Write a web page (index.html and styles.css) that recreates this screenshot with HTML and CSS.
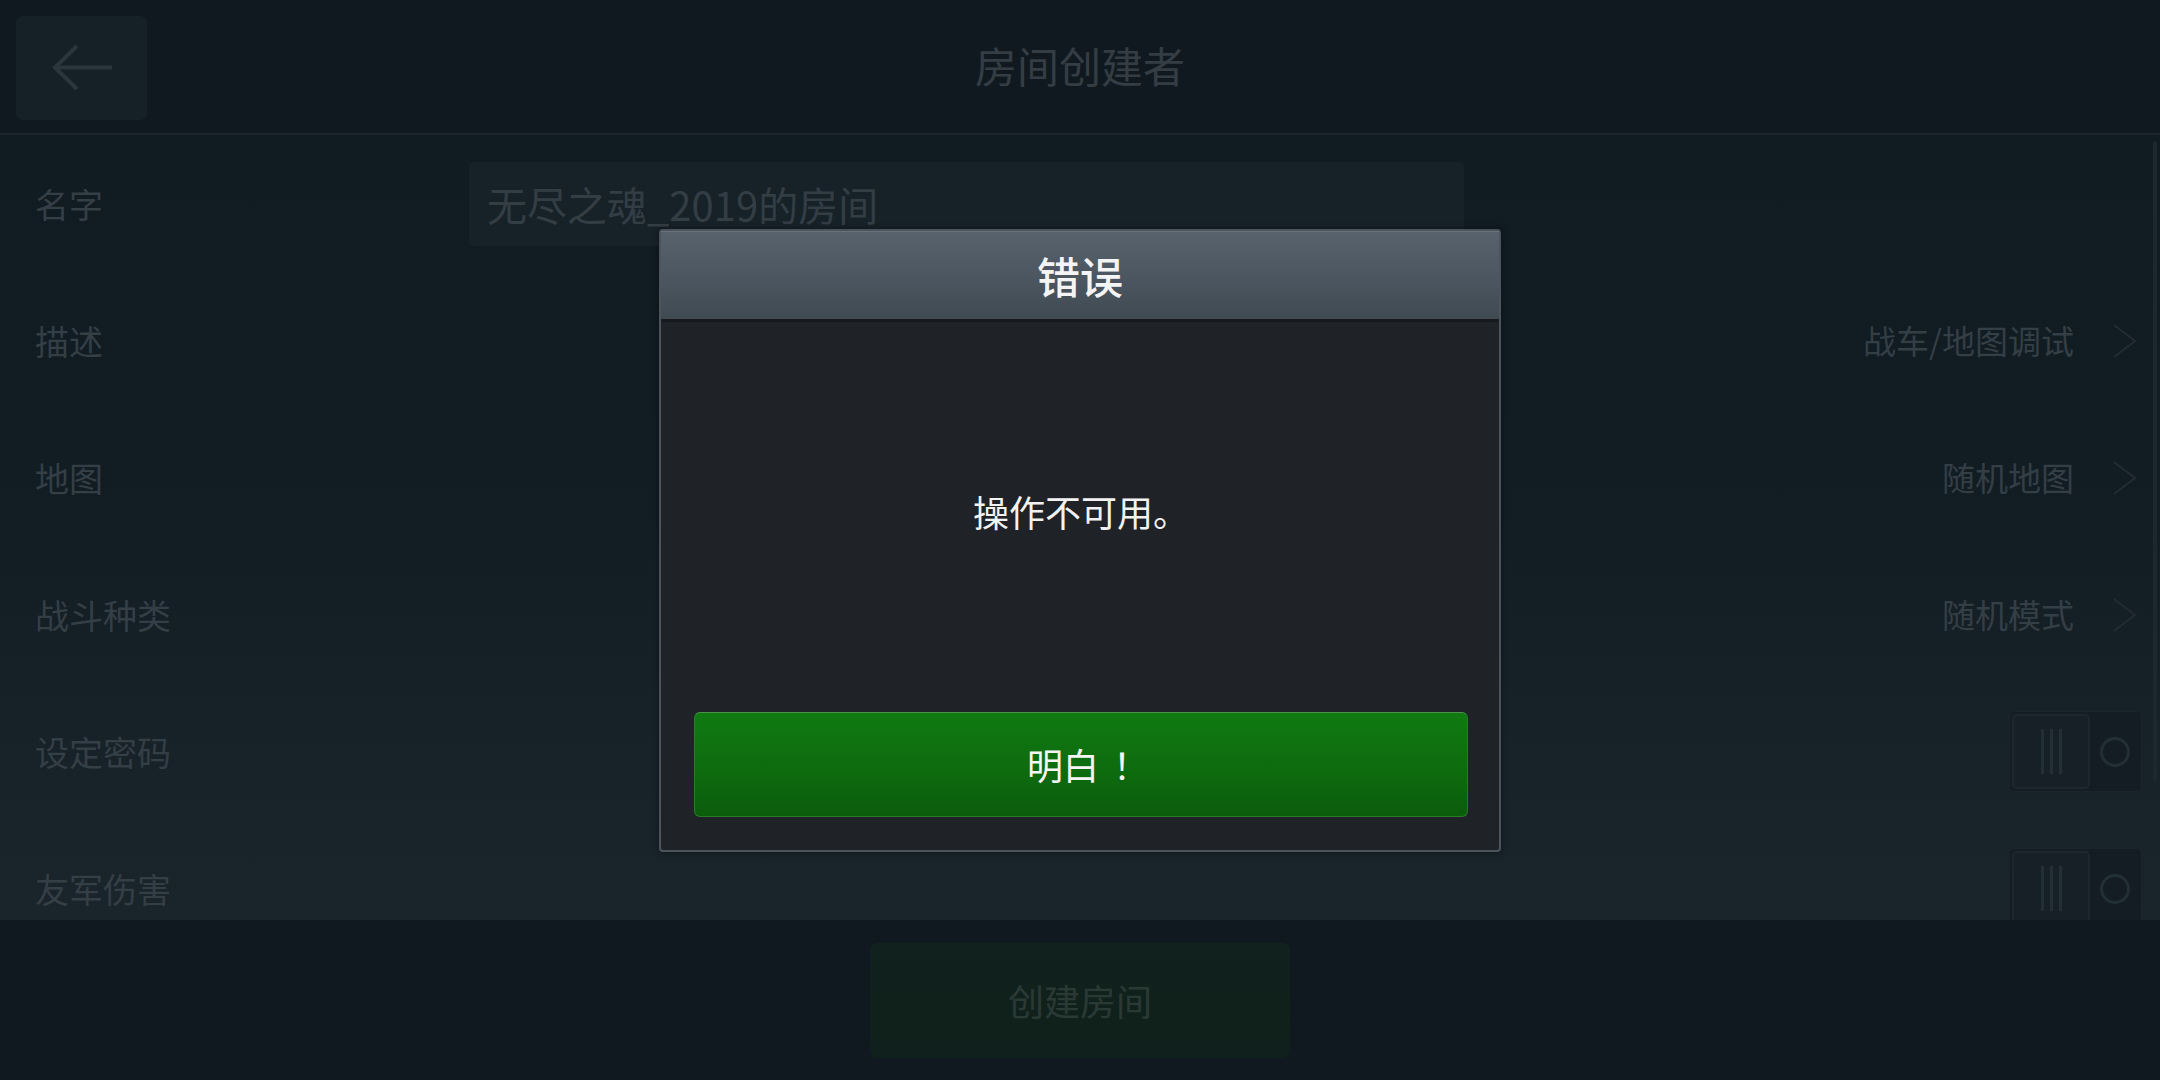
FILE: index.html
```html
<!DOCTYPE html>
<html lang="zh-CN">
<head>
<meta charset="utf-8">
<title>房间创建者</title>
<link rel="stylesheet" href="styles.css">
</head>
<body>
<div class="app">
  <header class="topbar">
    <button class="back-btn" aria-label="返回">
      <svg width="60" height="47" viewBox="0 0 60 47"><path d="M25 2 L3 23.5 L25 45 M3 23.5 H60" fill="none" stroke="#2a353c" stroke-width="4"/></svg>
    </button>
    <h1 class="title">房间创建者</h1>
    <div class="spacer"></div>
  </header>

  <main class="settings">
    <div class="row">
      <span class="label">名字</span>
      <div class="name-input">无尽之魂_2019的房间</div>
    </div>
    <div class="row">
      <span class="label">描述</span>
      <span class="value">战车/地图调试</span>
      <svg class="chev" width="26" height="36" viewBox="0 0 26 36"><path d="M2 2 L23 18 L2 34" fill="none" stroke="#222c32" stroke-width="2"/></svg>
    </div>
    <div class="row">
      <span class="label">地图</span>
      <span class="value">随机地图</span>
      <svg class="chev" width="26" height="36" viewBox="0 0 26 36"><path d="M2 2 L23 18 L2 34" fill="none" stroke="#222c32" stroke-width="2"/></svg>
    </div>
    <div class="row">
      <span class="label">战斗种类</span>
      <span class="value">随机模式</span>
      <svg class="chev" width="26" height="36" viewBox="0 0 26 36"><path d="M2 2 L23 18 L2 34" fill="none" stroke="#222c32" stroke-width="2"/></svg>
    </div>
    <div class="row">
      <span class="label">设定密码</span>
      <div class="toggle">
        <div class="knob"><i></i><i></i><i></i></div>
        <div class="off-mark"></div>
      </div>
    </div>
    <div class="row">
      <span class="label">友军伤害</span>
      <div class="toggle">
        <div class="knob"><i></i><i></i><i></i></div>
        <div class="off-mark"></div>
      </div>
    </div>
    <div class="scrollbar"></div>
  </main>

  <footer class="bottombar">
    <button class="create-btn">创建房间</button>
  </footer>

  <div class="overlay">
    <div class="dialog">
      <div class="dialog-title">错误</div>
      <div class="dialog-body">
        <div class="dialog-msg">操作不可用。</div>
        <button class="ok-btn">明白<span class="bang">！</span></button>
      </div>
    </div>
  </div>
</div>
</body>
</html>
```

FILE: styles.css
```css
* { box-sizing: border-box; }
html, body {
  margin: 0;
  padding: 0;
  width: 2160px;
  height: 1080px;
  overflow: hidden;
  background: #10191f;
  font-family: "Noto Sans CJK SC", "Noto Sans", sans-serif;
}
button {
  font-family: inherit;
  border: none;
  padding: 0;
  cursor: pointer;
}
.app {
  position: relative;
  width: 2160px;
  height: 1080px;
  display: flex;
  flex-direction: column;
}

/* header */
.topbar {
  height: 135px;
  flex: 0 0 135px;
  background: #101920;
  border-bottom: 2px solid #1b252c;
  display: grid;
  grid-template-columns: 1fr auto 1fr;
  align-items: center;
  padding: 0 16px;
}
.back-btn {
  width: 131px;
  height: 104px;
  background: #152027;
  border-radius: 7px;
  display: flex;
  align-items: center;
  justify-content: center;
  margin-top: 2px;
}
.title {
  margin: 0 0 4px;
  font-size: 42px;
  font-weight: 400;
  color: #343d43;
  line-height: 1;
}

/* settings list */
.settings {
  position: relative;
  flex: 0 0 785px;
  height: 785px;
  overflow: hidden;
  background: linear-gradient(180deg, #111b22 0%, #121c23 45%, #172128 75%, #1a242b 100%);
}
.row {
  height: 137px;
  display: flex;
  align-items: center;
  padding: 0 18px 0 35px;
}
.label {
  width: 434px;
  font-size: 34px;
  color: #343e45;
  line-height: 1;
}
.name-input {
  width: 995px;
  height: 84px;
  background: #172128;
  border-radius: 4px;
  display: flex;
  align-items: center;
  padding-left: 18px;
  font-size: 40px;
  color: #333d44;
}
.value {
  margin-left: auto;
  font-size: 33px;
  color: #343e45;
  line-height: 1;
}
.chev {
  margin-left: 38px;
  margin-right: 4px;
}
.toggle {
  margin-left: auto;
  width: 133px;
  height: 81px;
  background: #141d23;
  border: 1px solid #1a242a;
  border-radius: 5px;
  display: flex;
  align-items: center;
  padding: 2px;
}
.knob {
  width: 78px;
  height: 75px;
  background: #172027;
  border: 2px solid #1c272e;
  border-radius: 5px;
  display: flex;
  align-items: center;
  justify-content: center;
  gap: 6px;
}
.knob i {
  display: block;
  width: 3px;
  height: 45px;
  background: #232f37;
}
.off-mark {
  width: 30px;
  height: 30px;
  margin-left: 10px;
  border: 3px solid #232f37;
  border-radius: 50%;
}
.scrollbar {
  position: absolute;
  right: 3px;
  top: 6px;
  width: 4px;
  height: 640px;
  background: #1d272e;
  border-radius: 2px;
}

/* bottom bar */
.bottombar {
  flex: 1;
  background: #10191f;
  display: flex;
  align-items: center;
  justify-content: center;
}
.create-btn {
  width: 420px;
  height: 115px;
  border-radius: 8px;
  background: linear-gradient(180deg, #11221e 0%, #10211c 70%, #0f1f1b 100%);
  color: #2b3935;
  font-size: 36px;
}

/* dialog */
.overlay {
  position: absolute;
  inset: 0;
  display: flex;
  align-items: center;
  justify-content: center;
}
.dialog {
  width: 842px;
  height: 623px;
  border: 2px solid #4b545c;
  border-radius: 4px;
  background: #1f2227;
  display: flex;
  flex-direction: column;
  box-shadow: 0 0 6px rgba(0,0,0,0.4);
}
.dialog-title {
  height: 91px;
  flex: 0 0 91px;
  background: linear-gradient(180deg, #57626c 0%, #4d5862 45%, #3f4a53 100%);
  border-bottom: 3px solid #17191c;
  border-top: 1px solid #69727a;
  color: #f4f4f4;
  font-size: 43px;
  font-weight: 500;
  display: flex;
  align-items: center;
  justify-content: center;
}
.dialog-body {
  flex: 1;
  display: flex;
  flex-direction: column;
  padding: 0 31px 33px 33px;
}
.dialog-msg {
  flex: 1;
  display: flex;
  align-items: center;
  justify-content: center;
  padding-bottom: 12px;
  color: #f2f2f2;
  font-size: 36px;
}
.ok-btn {
  height: 105px;
  border-radius: 6px;
  border: 1px solid #2b7b2b;
  border-top-color: #4a944a;
  background: linear-gradient(180deg, #107a11 0%, #0e6d0f 50%, #0b5c0c 100%);
  color: #f5f5f5;
  font-size: 36px;
  padding-left: 14px;
}
.bang {
  margin-left: 14px;
}
```
